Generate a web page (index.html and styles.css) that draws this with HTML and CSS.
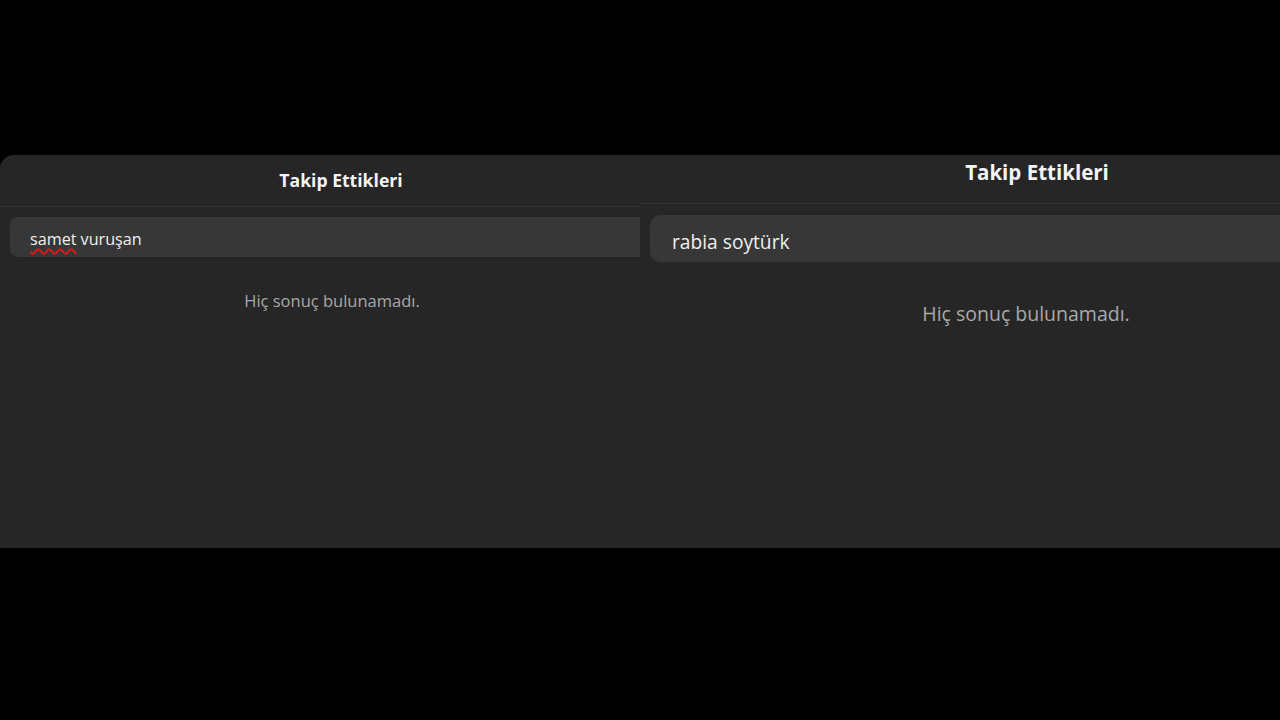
FILE: index.html
```html
<!DOCTYPE html>
<html lang="tr">
<head>
<meta charset="utf-8">
<link rel="stylesheet" href="styles.css">
</head>
<body>
<div class="stage">
  <section class="panel panel-left">
    <div class="inner inner-left">
      <header class="head head-left"><h2 class="title title-left">Takip Ettikleri</h2></header>
      <div class="search search-left"><span class="typo">samet</span> vuruşan</div>
      <p class="empty empty-left">Hiç sonuç bulunamadı.</p>
    </div>
  </section>
  <section class="panel panel-right">
    <div class="inner inner-right">
      <header class="head head-right"><h2 class="title title-right">Takip Ettikleri</h2></header>
      <div class="search search-right">rabia soytürk</div>
      <p class="empty empty-right">Hiç sonuç bulunamadı.</p>
    </div>
  </section>
</div>
</body>
</html>
```
FILE: styles.css
```css
html, body {
  margin: 0;
  padding: 0;
  background: #000;
  width: 1280px;
  height: 720px;
  overflow: hidden;
}
body {
  font-family: "Open Sans", "Noto Sans", sans-serif;
  color: #f2f2f2;
}
.stage {
  display: flex;
  padding-top: 155px;
}
.panel {
  width: 640px;
  height: 393px;
  background: #262626;
  overflow: hidden;
}
.panel-left {
  border-top-left-radius: 14px;
}
.inner-left { width: 682px; }
.inner-right { width: 794px; }
.head {
  border-bottom: 1px solid #333;
  display: flex;
  align-items: center;
  justify-content: center;
}
.head-left { height: 51px; }
.head-right { height: 48px; }
.title {
  margin: 0;
  font-weight: 700;
  color: #f4f4f4;
}
.title-left { font-size: 17.6px; margin-top: -1px; }
.title-right { font-size: 20.5px; margin-top: -14px; }
.search {
  background: #373737;
  display: flex;
  align-items: center;
  color: #f0f0f0;
  box-sizing: border-box;
}
.search-left {
  margin: 10px 0 0 10px;
  height: 40px;
  border-radius: 8px;
  padding: 4px 0 0 20px;
  font-size: 16.2px;
  gap: 4px;
}
.search-right {
  margin: 11px 0 0 10px;
  height: 47px;
  border-radius: 10px;
  padding: 5px 0 0 22px;
  font-size: 19.2px;
}
.typo {
  text-decoration-line: underline;
  text-decoration-style: wavy;
  text-decoration-color: #e01818;
  text-decoration-thickness: 1.5px;
  text-underline-offset: 3px;
}
.empty {
  margin: 0;
  color: #a8a8a8;
  text-align: center;
}
.empty-left {
  font-size: 16.5px;
  padding-top: 32px;
  width: 664px;
}
.empty-right {
  font-size: 19.5px;
  padding-top: 38px;
  width: 772px;
}
```
